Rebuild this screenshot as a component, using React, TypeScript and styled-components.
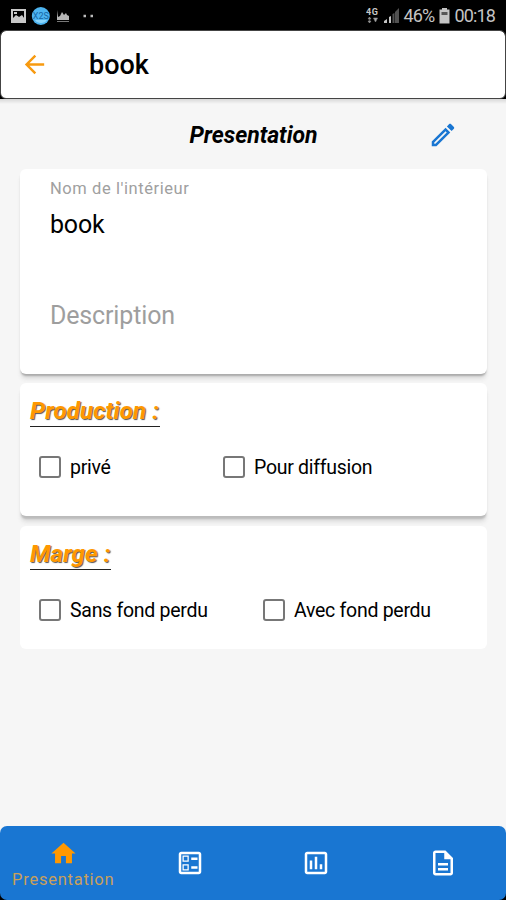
import React from "react";
import styled, { createGlobalStyle } from "styled-components";

const GlobalStyle = createGlobalStyle`
  * { box-sizing: border-box; }
  body { margin: 0; background: #000; }
`;

const Screen = styled.div`
  width: 506px;
  height: 900px;
  display: flex;
  flex-direction: column;
  overflow: hidden;
  background: #000;
  color: #000;
  font-family: Roboto, "Liberation Sans", sans-serif;
  white-space: nowrap;
`;

const StatusBar = styled.div`
  flex: none;
  height: 30px;
  padding: 2px 11px 0 10px;
  display: flex;
  justify-content: space-between;
  align-items: center;
  color: #c4c4c4;
`;

const StatusGroup = styled.div`
  display: flex;
  align-items: center;
`;

const StatusText = styled.span`
  font-size: 18px;
  line-height: 20px;
  letter-spacing: -0.85px;
`;

const Header = styled.header`
  flex: none;
  height: 69px;
  display: flex;
  align-items: center;
  padding-left: 19px;
  background: linear-gradient(#fff, #fff) padding-box, linear-gradient(#000 60%, #f6f6f6 96%) border-box;
  border: 1px solid #444;
  border-radius: 6px;
`;

const HeaderTitle = styled.h1`
  margin: 1px 0 0 40px;
  font-size: 27px;
  line-height: 32px;
  font-weight: 500;
`;

const Content = styled.main`
  flex: 1;
  padding: 0 19px 0 20px;
  background: linear-gradient(#d8d8d8, #f6f6f6 5px);
`;

const TitleRow = styled.div`
  height: 70px;
  display: grid;
  grid-template-columns: 1fr auto 1fr;
  align-items: center;
  padding-top: 2px;
`;

const PageTitle = styled.h2`
  grid-column: 2;
  margin: 1px 0 0;
  font-size: 23px;
  font-weight: 700;
  font-style: italic;
  letter-spacing: -0.02px;
`;

const EditButton = styled.button`
  justify-self: end;
  margin: -1px 29px 0 0;
  padding: 0;
  border: 0;
  background: none;
  display: flex;
`;

const Card = styled.section<{ $height: number; $gap?: number; $shadow?: string }>`
  height: ${(p) => p.$height}px;
  margin-bottom: ${(p) => p.$gap ?? 0}px;
  background: #fff;
  border-radius: 6px;
  box-shadow: ${(p) => p.$shadow ?? "none"};
`;

const Fields = styled.div`
  padding: 9px 30px 0;
`;

const FieldLabel = styled.div`
  font-size: 16.5px;
  line-height: 22px;
  letter-spacing: 0.57px;
  color: #a0a0a0;
`;

const FieldValue = styled.div`
  margin-top: 10px;
  font-size: 25px;
  line-height: 30px;
  letter-spacing: -0.2px;
`;

const Placeholder = styled.div`
  margin-top: 61px;
  font-size: 25px;
  line-height: 30px;
  letter-spacing: -0.15px;
  color: #9e9e9e;
`;

const SectionTitle = styled.h3<{ $width: number }>`
  width: ${(p) => p.$width}px;
  height: 44px;
  margin: 0 0 0 10px;
  padding-top: 13px;
  border-bottom: 1.5px solid #222;
  font-size: 24px;
  line-height: 30px;
  font-weight: 700;
  font-style: italic;
  color: #ff9800;
  text-shadow: 1px 1px 1px #555;
  letter-spacing: 0.15px;
`;

const Options = styled.div<{ $second: number }>`
  display: grid;
  grid-template-columns: ${(p) => p.$second}px auto;
  padding: 28px 0 0 19px;
`;

const Option = styled.label`
  display: flex;
  align-items: center;
  height: 24px;
  gap: 9px;
  font-size: 19.5px;
  letter-spacing: -0.28px;
`;

const Box = styled.span`
  width: 22px;
  height: 22px;
  border: 2px solid #777;
  border-radius: 3px;
`;

const NavWrap = styled.div`
  flex: none;
  background: linear-gradient(#f6f6f6 50%, #000 50%);
`;

const Nav = styled.nav`
  height: 74px;
  display: grid;
  grid-template-columns: repeat(4, 1fr);
  background: #1976d2;
  border-radius: 7px;
`;

const NavItem = styled.a<{ $active?: boolean }>`
  display: flex;
  flex-direction: column;
  align-items: center;
  justify-content: center;
  padding-top: ${(p) => (p.$active ? 3 : 0)}px;
  color: ${(p) => (p.$active ? "#ff9800" : "#fff")};
`;

const NavLabel = styled.span`
  font-size: 16.5px;
  line-height: 20px;
  letter-spacing: 0.75px;
  margin-top: 2px;
  color: #c9a05a;
`;

const Icon = ({ d, size, color = "currentColor" }: { d: string; size: number; color?: string }) => (
  <svg width={size} height={size} viewBox="0 0 24 24" fill={color} fillRule="evenodd">
    <path d={d} />
  </svg>
);

const icons = {
  back: "M20 11H7.83l5.59-5.59L12 4l-8 8 8 8 1.41-1.41L7.83 13H20v-2z",
  edit: "M14.06 9.02l.92.92L5.92 19H5v-.92l9.06-9.06M17.66 3c-.25 0-.51.1-.7.29l-1.83 1.83 3.75 3.75 1.83-1.83c.39-.39.39-1.02 0-1.41l-2.34-2.34c-.2-.2-.45-.29-.71-.29zm-3.6 3.19L3 17.25V21h3.75L17.81 9.94l-3.75-3.75z",
  home: "M10 20v-6h4v6h5v-8h3L12 3 2 12h3v8z",
  ballot: "M13 7.5h5v2h-5zm0 7h5v2h-5zM19 3H5c-1.1 0-2 .9-2 2v14c0 1.1.9 2 2 2h14c1.1 0 2-.9 2-2V5c0-1.1-.9-2-2-2zm0 16H5V5h14v14zM11 6H6v5h5V6zm-1 4H7V7h3v3zm1 3H6v5h5v-5zm-1 4H7v-3h3v3z",
  chart: "M19 3H5c-1.1 0-2 .9-2 2v14c0 1.1.9 2 2 2h14c1.1 0 2-.9 2-2V5c0-1.1-.9-2-2-2zm0 16H5V5h14v14zM7 10h2v7H7zm4-3h2v10h-2zm4 6h2v4h-2z",
  doc: "M8 16h8v2H8zm0-4h8v2H8zm6-10H6c-1.1 0-2 .9-2 2v16c0 1.1.89 2 1.99 2H18c1.1 0 2-.9 2-2V8l-6-6zm4 18H6V4h7v5h5v11z",
};

const StatusLeft = () => (
  <svg width="90" height="24" viewBox="0 0 90 24">
    <path d="M1 5h15v14H1zM3 7v7l3-3 3 2 3-2 2 3V7z" fill="#c8c8c8" fillRule="evenodd" />
    <path d="M3 16l4-4 3 2 2-2 3 4z" fill="#c8c8c8" />
    <rect x="4" y="8" width="3" height="2" fill="#c8c8c8" />
    <circle cx="30.8" cy="12" r="9" fill="#4db4f0" />
    <path d="M25 16a7 6 0 0 0 12 0z" fill="#8bd5fa" />
    <text x="30.8" y="14.5" fontSize="9" textAnchor="middle" fill="#1767a5">X2S</text>
    <path d="M47 6v10h12v-4l-2-1-1-2-2 2-2-3-2 4-2 1z" fill="#b5b5b5" />
    <path d="M47 17.5h12" stroke="#777" />
    <path d="M73.5 12h2.5M80.5 12h2.5" stroke="#bbb" strokeWidth="2.5" />
  </svg>
);

const Network = () => (
  <svg width="38" height="24" viewBox="0 0 38 24">
    <text x="0" y="11" fontSize="9" fontWeight="700" fill="#c8c8c8" textLength="12">4G</text>
    <path d="M2 17h3l-1.5 2zM2 15h3l-1.5-2zM3.5 13v6M7.5 14h4l-2 4z" fill="#aaa" stroke="#888" strokeWidth=".6" />
    <path d="M18 19v-2l3-2v4zM23 19v-6l2-1v7z" fill="#c4c4c4" />
    <path d="M26.5 19v-9l2-1v10zM29 19V8l4-4v15z" fill="#515151" />
  </svg>
);

const BatterySvg = styled.svg`
  margin: 0 4px 0 5px;
`;

const Battery = () => (
  <BatterySvg width="11" height="18" viewBox="0 0 11 18">
    <path d="M3 1h5v1.5h2.5V16.5H.5V2.5H3z" fill="#c4c4c4" />
    <path d="M2.5 5h6v3h-6z" fill="#555" />
  </BatterySvg>
);

const CheckOption = ({ label }: { label: string }) => (
  <Option>
    <Box />
    {label}
  </Option>
);

export default function App() {
  return (
    <Screen>
      <GlobalStyle />
      <StatusBar>
        <StatusLeft />
        <StatusGroup>
          <Network />
          <StatusText>46%</StatusText>
          <Battery />
          <StatusText>00:18</StatusText>
        </StatusGroup>
      </StatusBar>
      <Header>
        <Icon d={icons.back} size={29} color="#f79a10" />
        <HeaderTitle>book</HeaderTitle>
      </Header>
      <Content>
        <TitleRow>
          <PageTitle>Presentation</PageTitle>
          <EditButton aria-label="Modifier">
            <Icon d={icons.edit} size={30} color="#1976d2" />
          </EditButton>
        </TitleRow>
        <Card $height={205} $gap={9} $shadow="0 3px 2px -1px #aaa, 0 6px 4px -1px #ddd">
          <Fields>
            <FieldLabel>Nom de l'intérieur</FieldLabel>
            <FieldValue>book</FieldValue>
            <Placeholder>Description</Placeholder>
          </Fields>
        </Card>
        <Card $height={133} $gap={10} $shadow="0 4px 2px -1px #bbb, 0 7px 4px -1px #ddd">
          <SectionTitle $width={130}>Production :</SectionTitle>
          <Options $second={184}>
            <CheckOption label="privé" />
            <CheckOption label="Pour diffusion" />
          </Options>
        </Card>
        <Card $height={123}>
          <SectionTitle $width={81}>Marge :</SectionTitle>
          <Options $second={224}>
            <CheckOption label="Sans fond perdu" />
            <CheckOption label="Avec fond perdu" />
          </Options>
        </Card>
      </Content>
      <NavWrap>
        <Nav>
          <NavItem $active>
            <Icon d={icons.home} size={29} />
            <NavLabel>Presentation</NavLabel>
          </NavItem>
          <NavItem><Icon d={icons.ballot} size={30} /></NavItem>
          <NavItem><Icon d={icons.chart} size={30} /></NavItem>
          <NavItem><Icon d={icons.doc} size={30} /></NavItem>
        </Nav>
      </NavWrap>
    </Screen>
  );
}
